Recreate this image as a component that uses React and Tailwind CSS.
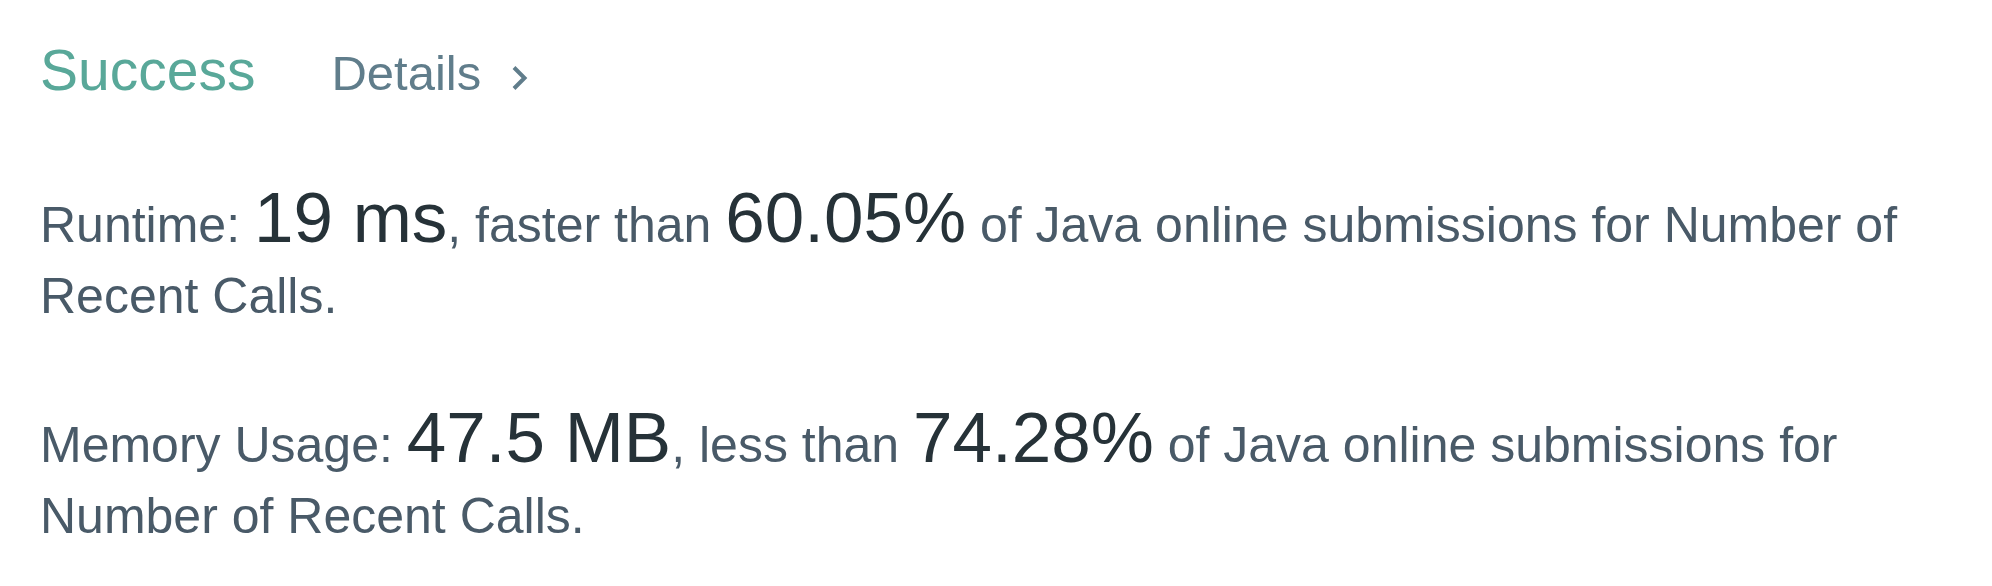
export default function App() {
  return (
    <div className="min-h-screen bg-white px-[40px] pt-[42px] font-['Liberation_Sans',Arial,sans-serif]">
      {/* Result header */}
      <div className="flex items-baseline">
        <span className="text-[57px] leading-none text-[#59a899]">Success</span>
        <a className="ml-[76px] flex items-baseline text-[49px] leading-none text-[#607d8b]" href="#">
          Details
          <svg className="ml-[30px] h-[26px] w-[18px] self-center translate-y-[4px]" viewBox="0 0 18 26" fill="none">
            <path d="M3 2.5 L13.5 13 L3 23.5" stroke="#607d8b" strokeWidth="4" />
          </svg>
        </a>
      </div>

      <p className="mt-[83px] text-[50px] leading-[71px] text-[#495a68]">
        Runtime: <span className="text-[71px] leading-none text-[#263238]">19 ms</span>, faster than{' '}
        <span className="text-[71px] leading-none text-[#263238]">60.05%</span> of Java online submissions for Number
        of Recent Calls.
      </p>

      <p className="mt-[70px] text-[50px] leading-[71px] text-[#495a68]">
        Memory Usage: <span className="text-[71px] leading-none text-[#263238]">47.5 MB</span>, less than{' '}
        <span className="text-[71px] leading-none text-[#263238]">74.28%</span> of Java online submissions for
        Number of Recent Calls.
      </p>
    </div>
  )
}
